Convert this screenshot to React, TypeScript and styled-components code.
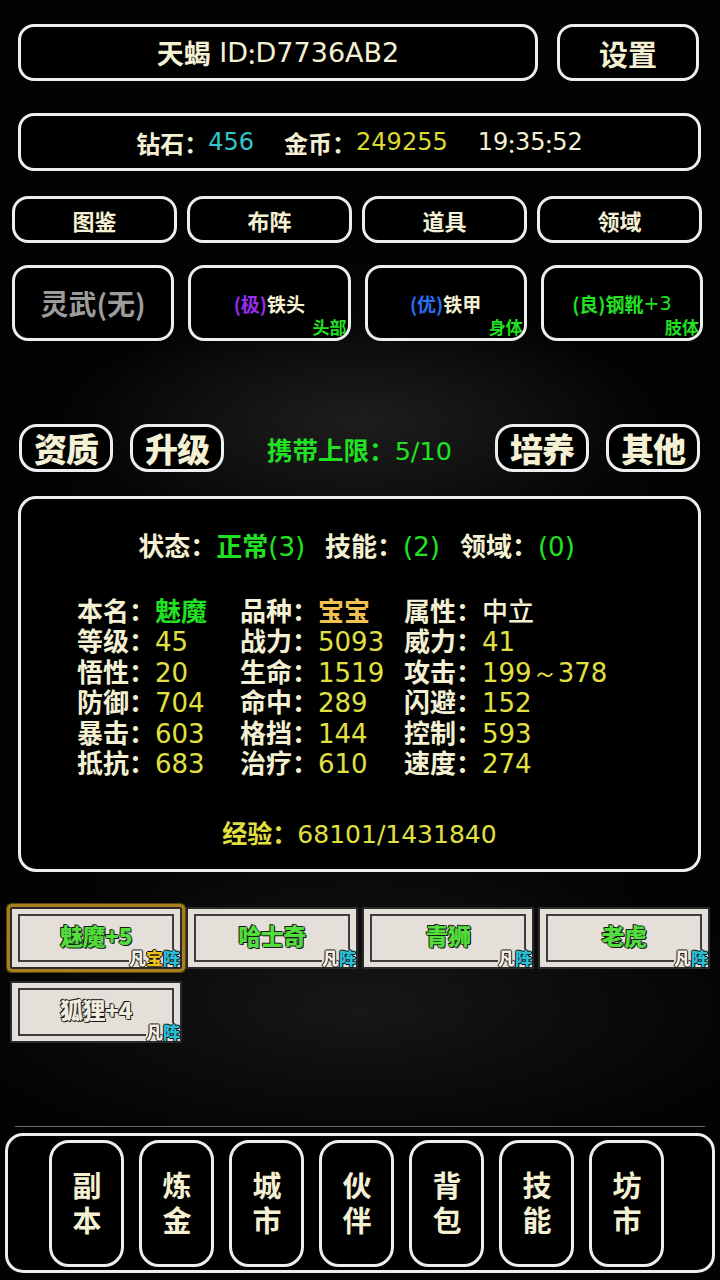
import React from "react";
import styled, { createGlobalStyle, css } from "styled-components";

const CREAM = "#f4f0d4";
const LINE = "#eeeeee";
const GREEN = "#22e022";
const YELLOW = "#e2e040";

const Global = createGlobalStyle`
  html, body { margin: 0; padding: 0; }
  body {
    background: #000;
    font-family: "DejaVu Sans", "Noto Sans CJK SC", sans-serif;
    color: ${CREAM};
  }
`;

const Page = styled.div`
  width: 720px;
  height: 1280px;
  box-sizing: border-box;
  padding-top: 24px;
  display: flex;
  flex-direction: column;
  background:
    radial-gradient(ellipse 300px 110px at 50% 420px, rgba(55,55,55,0.45), rgba(0,0,0,0) 100%),
    radial-gradient(ellipse 420px 150px at 50% 1010px, rgba(45,45,45,0.45), rgba(0,0,0,0) 100%),
    radial-gradient(ellipse 420px 520px at 50% 660px, #0e0e0e, #030303 80%);
`;

const Box = styled.div<{ $r?: number }>`
  box-sizing: border-box;
  border: 3px solid ${LINE};
  border-radius: ${(p) => p.$r ?? 16}px;
  background: #000;
  display: flex;
  align-items: center;
  justify-content: center;
`;

const TopRow = styled.div`
  display: flex;
  height: 57px;
  padding-left: 18px;
  gap: 19px;
`;

const IdBox = styled(Box)`
  width: 520px;
  font-size: 27px;
`;

const SettingsBox = styled(Box)`
  width: 142px;
  font-size: 29px;
  font-weight: 700;
  font-family: "Noto Sans CJK SC", sans-serif;
`;

const Cjk = styled.span<{ $c?: string; $w?: number }>`
  font-family: "Noto Sans CJK SC", sans-serif;
  font-weight: ${(p) => p.$w ?? 700};
  color: ${(p) => p.$c ?? CREAM};
`;

const Num = styled.span<{ $c?: string }>`
  font-family: "DejaVu Sans", sans-serif;
  font-weight: 400;
  color: ${(p) => p.$c ?? CREAM};
`;

const StatusBar = styled(Box)`
  margin: 32px 19px 0 18px;
  height: 58px;
  font-size: 24px;
`;

const Gap = styled.span<{ $w: number }>`
  display: inline-block;
  width: ${(p) => p.$w}px;
`;

const MenuGrid = styled.div`
  margin: 25px 18px 0 12px;
  display: grid;
  grid-template-columns: repeat(4, 1fr);
  gap: 10px;
`;

const MenuBtn = styled(Box)`
  height: 47px;
  font-family: "Noto Sans CJK SC", sans-serif;
  font-weight: 700;
  font-size: 22px;
`;

const EquipGrid = styled.div`
  margin: 22px 17px 0 12px;
  display: grid;
  grid-template-columns: repeat(4, 1fr);
  gap: 14px;
`;

const EquipCard = styled(Box)`
  position: relative;
  height: 76px;
  font-size: 19px;
  font-family: "Noto Sans CJK SC", sans-serif;
  font-weight: 700;
`;

const EquipEmpty = styled.span`
  color: #9c9c9c;
  font-size: 28px;
  font-weight: 700;
`;

const SlotTag = styled.span`
  position: absolute;
  right: 1px;
  bottom: 1px;
  font-size: 17px;
  font-weight: 700;
  color: ${GREEN};
  line-height: 20px;
`;

const ActionRow = styled.div`
  margin: 83px 20px 0 19px;
  height: 48px;
  display: flex;
  align-items: center;
`;

const ActionBtn = styled(Box)`
  width: 94px;
  height: 48px;
  border-radius: 18px;
  font-family: "Noto Sans CJK SC", sans-serif;
  font-weight: 900;
  font-size: 33px;
  letter-spacing: -1px;
  & + & { margin-left: 17px; }
`;

const Carry = styled.div`
  flex: 1;
  text-align: center;
  font-size: 25.5px;
  color: ${GREEN};
`;

const StatsPanel = styled.div`
  margin: 24px 19px 0 18px;
  height: 376px;
  box-sizing: border-box;
  border: 3px solid ${LINE};
  border-radius: 18px;
  background: #000;
  padding: 31px 0 0 56px;
  display: flex;
  flex-direction: column;
`;

const StateRow = styled.div`
  margin-left: -56px;
  height: 30px;
  line-height: 30px;
  text-align: center;
  font-size: 26px;
  padding-right: 6px;
  white-space: pre;
`;

const StatGrid = styled.div`
  margin-top: 35px;
  display: grid;
  grid-template-columns: 163px 164px auto;
  grid-auto-rows: 30.4px;
  font-size: 26px;
`;

const StatCell = styled.div`
  line-height: 30px;
  height: 30.4px;
  white-space: pre;
`;

const ExpRow = styled.div`
  margin: 40px 0 0 -56px;
  height: 30px;
  line-height: 30px;
  text-align: center;
  font-size: 25px;
  color: ${YELLOW};
`;

const PetGrid = styled.div`
  margin: 35px 0 0 10px;
  display: grid;
  grid-template-columns: repeat(4, 172px);
  row-gap: 12px;
  column-gap: 4px;
`;

const PetCard = styled.div<{ $active?: boolean }>`
  position: relative;
  height: 62px;
  box-sizing: border-box;
  background: #e4dfd9;
  border: 2px solid #2a2a2a;
  padding: 5px 6px;
  ${(p) =>
    p.$active &&
    css`
      outline: 3px solid #a7801f;
      outline-offset: 0px;
      border-radius: 2px;
      box-shadow: 0 0 0 4px #5a4410;
    `}
`;

const PetFrame = styled.div`
  height: 100%;
  box-sizing: border-box;
  border: 2px solid #3c3c3c;
  display: flex;
  align-items: center;
  justify-content: center;
`;

const PetName = styled.span<{ $c: string }>`
  font-family: "Noto Sans CJK SC", sans-serif;
  font-weight: 900;
  font-size: 23px;
  letter-spacing: -0.5px;
  color: ${(p) => p.$c};
  -webkit-text-stroke: 1px #1d2d1a;
  paint-order: stroke fill;
  text-shadow: 0 0 1px #1a1a1a, 1px 1px 0 #1a1a1a, -1px -1px 0 #1a1a1a;
  margin-top: -6px;
`;

const PetTag = styled.span`
  position: absolute;
  right: 0px;
  bottom: 0px;
  font-family: "Noto Sans CJK SC", sans-serif;
  font-weight: 900;
  font-size: 17px;
  line-height: 18px;
  background: #e4dfd9;
`;

const TagChar = styled.span<{ $c: string }>`
  color: ${(p) => p.$c};
  text-shadow: 1px 0 0 #111, -1px 0 0 #111, 0 1px 0 #111, 0 -1px 0 #111;
`;

const Spacer = styled.div`
  flex: 1;
`;

const Separator = styled.div`
  margin: 0 15px;
  height: 1px;
  background: #6a6a6a;
`;

const BottomBar = styled.div`
  margin: 6px 5px 7px 5px;
  height: 140px;
  box-sizing: border-box;
  border: 3px solid ${LINE};
  border-radius: 18px;
  background: #000;
  display: flex;
  align-items: center;
  padding-left: 41px;
  gap: 15px;
`;

const NavBtn = styled.div`
  width: 75px;
  height: 127px;
  box-sizing: border-box;
  border: 3px solid ${LINE};
  border-radius: 20px;
  display: flex;
  align-items: center;
  justify-content: center;
`;

const NavLabel = styled.span`
  writing-mode: vertical-rl;
  text-orientation: upright;
  font-family: "Noto Sans CJK SC", sans-serif;
  font-weight: 700;
  font-size: 29px;
  letter-spacing: 6px;
  line-height: 1;
  margin-bottom: -6px;
`;

const L = ({ children }: { children: React.ReactNode }) => <Cjk>{children}</Cjk>;

const stats: [string, string][] = [
  ["等级", "45"], ["战力", "5093"], ["威力", "41"],
  ["悟性", "20"], ["生命", "1519"], ["攻击", "199～378"],
  ["防御", "704"], ["命中", "289"], ["闪避", "152"],
  ["暴击", "603"], ["格挡", "144"], ["控制", "593"],
  ["抵抗", "683"], ["治疗", "610"], ["速度", "274"],
];

const pets = [
  { name: "魅魔+5", color: "#52dd3c", active: true, bao: true },
  { name: "哈士奇", color: "#52dd3c" },
  { name: "青狮", color: "#52dd3c" },
  { name: "老虎", color: "#52dd3c" },
  { name: "狐狸+4", color: "#eeeade" },
];

const nav = ["副本", "炼金", "城市", "伙伴", "背包", "技能", "坊市"];

export default function App() {
  return (
    <>
      <Global />
      <Page>
        <TopRow>
          <IdBox>
            <Cjk>天蝎</Cjk>
            <Num>&nbsp;ID</Num>
            <Cjk $w={400}>:</Cjk>
            <Num>D7736AB2</Num>
          </IdBox>
          <SettingsBox>设置</SettingsBox>
        </TopRow>

        <StatusBar>
          <L>钻石：</L>
          <Num $c="#32c6cf">456</Num>
          <Gap $w={30} />
          <L>金币：</L>
          <Num $c="#dada2e">249255</Num>
          <Gap $w={30} />
          <Num>19</Num><Cjk $w={400}>:</Cjk><Num>35</Num><Cjk $w={400}>:</Cjk><Num>52</Num>
        </StatusBar>

        <MenuGrid>
          {["图鉴", "布阵", "道具", "领域"].map((t) => (
            <MenuBtn key={t}>{t}</MenuBtn>
          ))}
        </MenuGrid>

        <EquipGrid>
          <EquipCard>
            <EquipEmpty>灵武(无)</EquipEmpty>
          </EquipCard>
          <EquipCard>
            <Cjk $c="#9a2cf0">(极)</Cjk>
            <Cjk>铁头</Cjk>
            <SlotTag>头部</SlotTag>
          </EquipCard>
          <EquipCard>
            <Cjk $c="#2a6ef2">(优)</Cjk>
            <Cjk>铁甲</Cjk>
            <SlotTag>身体</SlotTag>
          </EquipCard>
          <EquipCard>
            <Cjk $c={GREEN}>(良)钢靴</Cjk>
            <Num $c={GREEN}>+3</Num>
            <SlotTag>肢体</SlotTag>
          </EquipCard>
        </EquipGrid>

        <ActionRow>
          <ActionBtn>资质</ActionBtn>
          <ActionBtn>升级</ActionBtn>
          <Carry>
            <Cjk $c={GREEN}>携带上限：</Cjk>
            <Num $c={GREEN}>5/10</Num>
          </Carry>
          <ActionBtn>培养</ActionBtn>
          <ActionBtn>其他</ActionBtn>
        </ActionRow>

        <StatsPanel>
          <StateRow>
            <L>状态：</L>
            <Cjk $c={GREEN}>正常</Cjk>
            <Num $c={GREEN}>(3)</Num>
            <Gap $w={20} />
            <L>技能：</L>
            <Num $c={GREEN}>(2)</Num>
            <Gap $w={20} />
            <L>领域：</L>
            <Num $c={GREEN}>(0)</Num>
          </StateRow>
          <StatGrid>
            <StatCell><L>本名：</L><Cjk $c={GREEN}>魅魔</Cjk></StatCell>
            <StatCell><L>品种：</L><Cjk $c="#f0c050">宝宝</Cjk></StatCell>
            <StatCell><L>属性：</L><Cjk $w={500}>中立</Cjk></StatCell>
            {stats.map(([k, v]) => (
              <StatCell key={k}>
                <L>{k}：</L>
                <Num $c={YELLOW}>{v}</Num>
              </StatCell>
            ))}
          </StatGrid>
          <ExpRow>
            <Cjk $c={YELLOW}>经验：</Cjk>
            <Num $c={YELLOW}>68101/1431840</Num>
          </ExpRow>
        </StatsPanel>

        <PetGrid>
          {pets.map((p) => (
            <PetCard key={p.name} $active={p.active}>
              <PetFrame>
                <PetName $c={p.color}>{p.name}</PetName>
              </PetFrame>
              <PetTag>
                <TagChar $c="#f4f0e4">凡</TagChar>
                {p.bao && <TagChar $c="#e8c020">宝</TagChar>}
                <TagChar $c="#28c0d8">阵</TagChar>
              </PetTag>
            </PetCard>
          ))}
        </PetGrid>

        <Spacer />
        <Separator />
        <BottomBar>
          {nav.map((n) => (
            <NavBtn key={n}>
              <NavLabel>{n}</NavLabel>
            </NavBtn>
          ))}
        </BottomBar>
      </Page>
    </>
  );
}
